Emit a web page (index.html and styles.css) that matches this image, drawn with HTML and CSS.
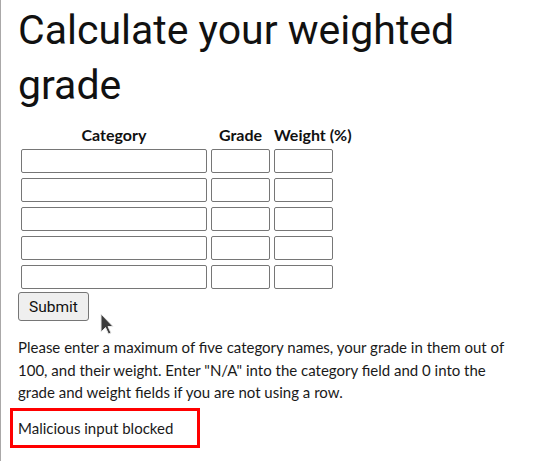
FILE: index.html
```html
<!DOCTYPE html>
<html>
<head>
<meta charset="utf-8">
<title>Weighted grade calculator</title>
<link rel="stylesheet" href="styles.css">
</head>
<body>
<main class="page">
  <h1 class="title">Calculate your weighted grade</h1>
  <form class="calc">
    <div class="grid">
      <div class="head">Category</div>
      <div class="head">Grade</div>
      <div class="head">Weight (%)</div>
      <input class="cat" type="text"><input class="num" type="text"><input class="num" type="text">
      <input class="cat" type="text"><input class="num" type="text"><input class="num" type="text">
      <input class="cat" type="text"><input class="num" type="text"><input class="num" type="text">
      <input class="cat" type="text"><input class="num" type="text"><input class="num" type="text">
      <input class="cat" type="text"><input class="num" type="text"><input class="num" type="text">
    </div>
    <button class="submit" type="button">Submit</button>
  </form>
  <p class="info">Please enter a maximum of five category names, your grade in them out of 100, and their weight. Enter "N/A" into the category field and 0 into the grade and weight fields if you are not using a row.</p>
  <div class="alert">Malicious input blocked</div>
</main>
<svg class="cursor" width="14" height="22" viewBox="0 0 14 22"><path d="M1 1 L1 19 L5.5 14.5 L8.5 21 L11 20 L8 13.5 L13 13.5 Z" fill="#3c3c3c" stroke="#e8e8e8" stroke-width="1" stroke-linejoin="round"/></svg>
</body>
</html>
```
FILE: styles.css
```css
html, body {
  margin: 0;
  padding: 0;
  background: #fff;
}
body {
  min-height: 100vh;
  border-left: 1px solid #aaa8a8;
  box-sizing: border-box;
  position: relative;
  color: #1a1a1a;
  font-family: Lato, "Liberation Sans", sans-serif;
  font-size: 15px;
}
.page {
  padding-left: 17px;
}
.title {
  margin: 3px 0 0;
  font-family: Roboto, "Liberation Sans", sans-serif;
  font-weight: 400;
  font-size: 41px;
  line-height: 55px;
  color: #111;
  width: 500px;
}
.calc {
  margin-top: 13px;
}
.grid {
  display: grid;
  grid-template-columns: 186px 59px 77px;
  column-gap: 4px;
  row-gap: 5px;
  margin-left: 3px;
}
.head {
  font-weight: 700;
  font-size: 16px;
  line-height: 18px;
  text-align: center;
  color: #111;
  white-space: nowrap;
}
.grid input {
  box-sizing: border-box;
  height: 24px;
  margin: 0;
  padding: 1px 2px;
  border: 1px solid #767676;
  border-radius: 2px;
  background: #fff;
  font: 13px Lato, sans-serif;
}
.cat { width: 186px; }
.num { width: 59px; }
.submit {
  display: block;
  margin-top: 3px;
  box-sizing: border-box;
  width: 71px;
  height: 29px;
  padding: 0;
  border: 1px solid #767676;
  border-radius: 3px;
  background: #efefef;
  font-family: Roboto, "Liberation Sans", sans-serif;
  font-size: 15.5px;
  color: #111;
}
.info {
  margin: 15px 0 4.5px;
  width: 505px;
  line-height: 22.5px;
}
.alert {
  box-sizing: border-box;
  width: 190px;
  height: 40px;
  margin-left: -8px;
  padding: 6px 5px;
  border: 3px solid #f00;
  line-height: 22.5px;
}
.cursor {
  position: absolute;
  left: 99px;
  top: 313px;
}
```
